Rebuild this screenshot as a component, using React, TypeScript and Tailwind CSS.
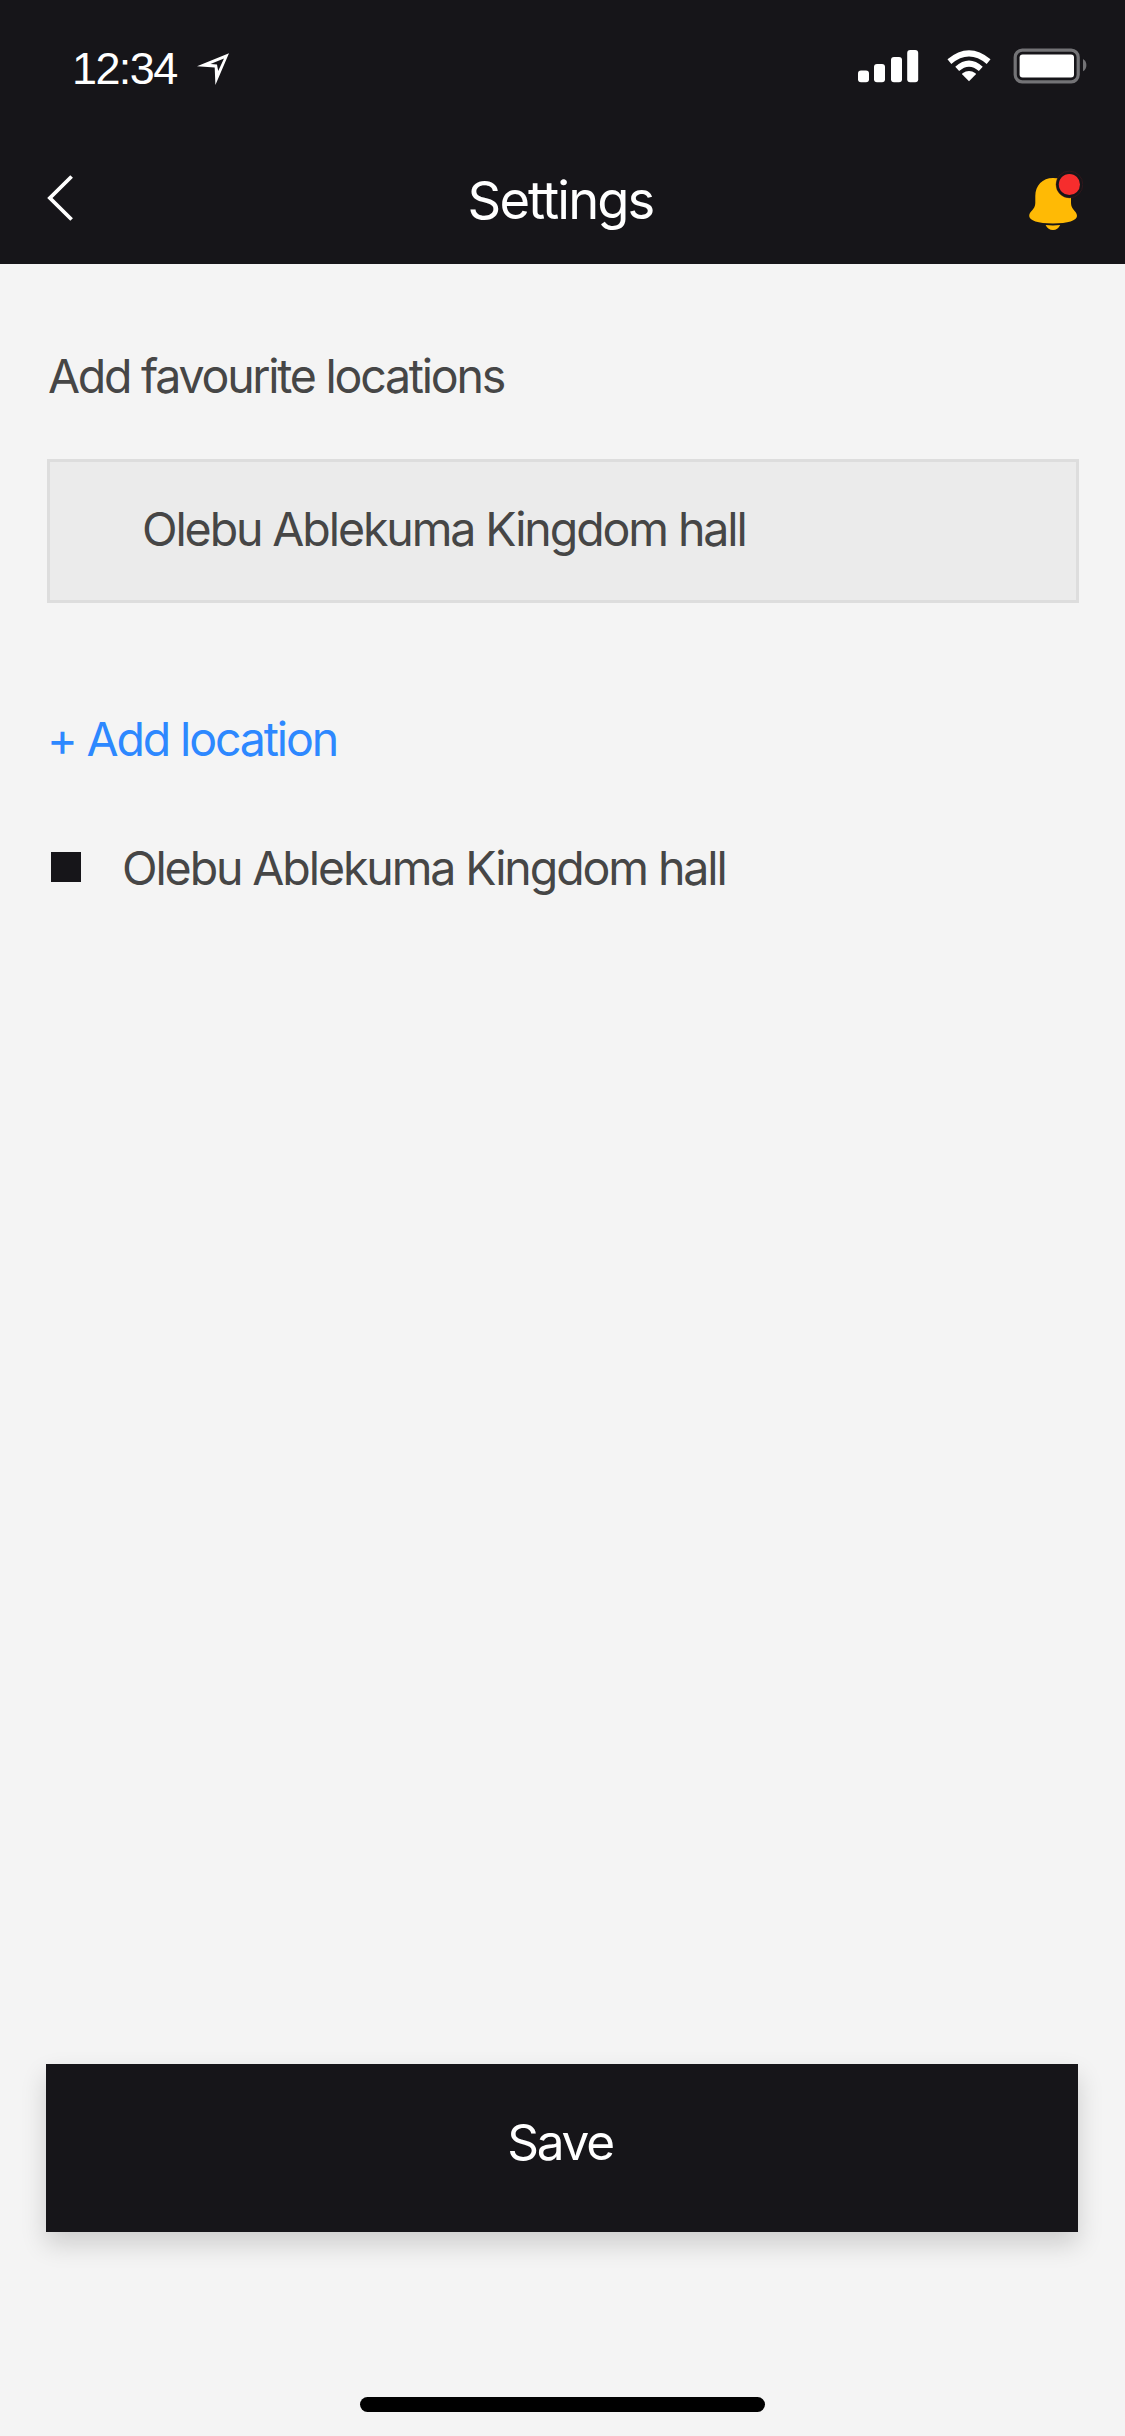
import React from "react";

function StatusBar() {
  return (
    <div className="flex h-[138px] items-start justify-between pl-[72px] pr-[37px]">
      <div className="flex items-start">
        <span className="mt-[43px] w-[125px] whitespace-nowrap font-['Liberation_Sans'] text-[45px] leading-[52px] tracking-[-1.6px]">
          12:34
        </span>
        <svg className="mt-[52px]" width="34" height="34" viewBox="0 0 34 34" fill="none">
          <path
            fillRule="evenodd"
            fill="#fff"
            d="M0 14.2 L32 1.2 L18.4 33 L17.7 15.4 Z M13.5 12 L20 12.4 L21.2 19 L27 6.5 Z"
          />
        </svg>
      </div>
      <svg className="mt-[44px]" width="232" height="44" viewBox="856 44 232 44" fill="none">
        <g fill="#fff">
          <rect x="858" y="70.4" width="11" height="11.8" rx="3" />
          <rect x="874" y="64" width="11" height="18.2" rx="3" />
          <rect x="891" y="57" width="11" height="25.2" rx="3" />
          <rect x="907.2" y="50" width="11" height="32.2" rx="3" />
          <path d="M969 81.2 L962.3 74.4 Q961.8 73.8 962.5 73.3 Q969 68.8 975.5 73.3 Q976.2 73.8 975.7 74.4 Z" />
        </g>
        <path d="M957.2 68.9 Q969 58.3 980.8 68.9" stroke="#fff" strokeWidth="5.8" />
        <path d="M949.4 61.6 Q969 45.2 988.6 61.6" stroke="#fff" strokeWidth="6" />
        <rect x="1015.2" y="50.2" width="63" height="31.6" rx="7" stroke="#737376" strokeWidth="3.2" />
        <rect x="1019.6" y="54.6" width="54.4" height="23" rx="3" fill="#fff" />
        <path d="M1083 59 Q1086.4 61 1086.4 65 Q1086.4 69.5 1083 71.3 Z" fill="#737376" />
      </svg>
    </div>
  );
}

function NotificationBell() {
  return (
    <svg width="56" height="64" viewBox="1027 169 56 64" fill="none">
      <path
        fill="#ffba05"
        d="M1053 178 C1042.5 178 1035.3 185.5 1035.3 196 L1035.3 203 C1035.3 210 1029.2 210.8 1029.2 216 C1029.2 220.5 1038 223.4 1053 223.4 C1068 223.4 1077 220.5 1077 216 C1077 210.8 1071 210 1071 203 L1071 196 C1071 185.5 1063.5 178 1053 178 Z"
      />
      <path fill="#ffba05" d="M1045.6 225 Q1053 225.8 1060.2 225 C1058.5 228.4 1056.3 230 1053 230 C1049.6 230 1047.3 228.4 1045.6 225 Z" />
      <circle cx="1069.4" cy="184.5" r="13.4" fill="#161519" stroke="#5c1b20" strokeWidth="0.4" />
      <circle cx="1069.4" cy="184.5" r="10.6" fill="#f62d2d" />
    </svg>
  );
}

export default function App() {
  return (
    <div className="flex h-[2436px] w-[1125px] flex-col overflow-hidden bg-[#f4f4f4] font-['Inter',sans-serif] text-[46.5px] leading-[60px] text-[#464646]">
      <header className="h-[264px] bg-[#161519] text-white">
        <StatusBar />
        <div className="grid grid-cols-[1fr_auto_1fr] items-start pl-[46px] pr-[42px]">
          <button aria-label="Back" className="mt-[35px] w-fit">
            <svg width="30" height="50" viewBox="46 173 30 50" fill="none">
              <path d="M71.6 176.5 L49.9 198 L71.6 219.5" stroke="#fff" strokeWidth="3.8" />
            </svg>
          </button>
          <h1 className="mt-[32px] pr-[8px] text-[52.5px] leading-[60px] tracking-[-1.9px]">Settings</h1>
          <button aria-label="Notifications" className="mt-[31px] justify-self-end">
            <NotificationBell />
          </button>
        </div>
      </header>

      <main className="flex flex-1 flex-col items-start pl-[46px] pr-[46px]">
        <h2 className="ml-[2px] mt-[82px] whitespace-nowrap tracking-[-2.25px]">Add favourite locations</h2>
        <div className="ml-[1px] mt-[53px] h-[144px] w-[1032px] border-[3px] border-[#dddddd] bg-[#ebebeb] pl-[92px] pt-[37px]">
          <span className="whitespace-nowrap tracking-[-2.1px]">Olebu Ablekuma Kingdom hall</span>
        </div>
        <button className="ml-[1px] mt-[106px] whitespace-nowrap tracking-[-2.15px] text-[#2d88ff]">+ Add location</button>
        <ul className="ml-[5px] mt-[69px]">
          <li className="flex items-center gap-[41px]">
            <span className="mb-[2px] size-[30px] bg-[#161519]" />
            <span className="whitespace-nowrap tracking-[-2.1px]">Olebu Ablekuma Kingdom hall</span>
          </li>
        </ul>
        <button className="mt-auto h-[168px] w-[1032px] bg-[#161519] pb-[12px] pr-[4px] text-[49.5px] tracking-[-2.2px] text-white shadow-[0_12px_24px_rgba(0,0,0,0.16)]">
          Save
        </button>
      </main>

      <footer className="flex h-[204px] justify-center pt-[165px]">
        <div className="h-[15px] w-[405px] rounded-full bg-black" />
      </footer>
    </div>
  );
}
